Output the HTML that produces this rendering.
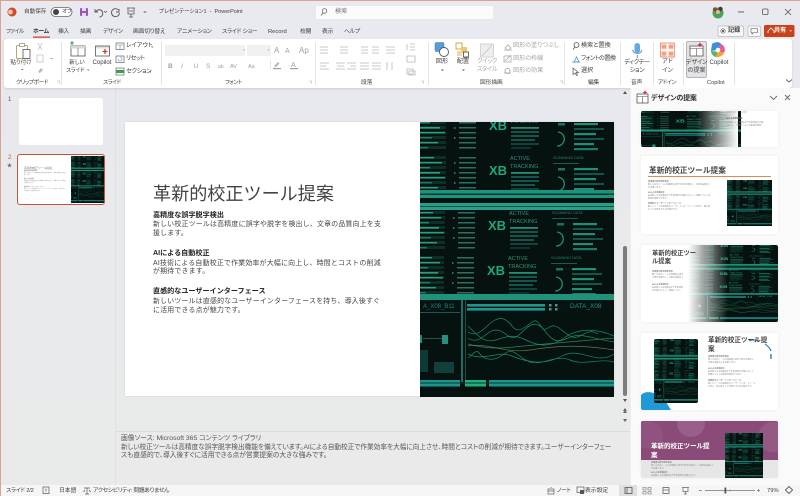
<!DOCTYPE html>
<html lang="ja"><head><meta charset="utf-8"><title>プレゼンテーション1 - PowerPoint</title>
<style>
html,body{margin:0;padding:0}
body{width:800px;height:496px;overflow:hidden;position:relative;background:#e9eaef;font-family:"Liberation Sans","Noto Sans CJK JP",sans-serif;color:#444}
#w{position:absolute;left:0;top:0;width:800px;height:496px;overflow:hidden;background:#e9eaef;filter:blur(.35px)}
.a{position:absolute}
.t{position:absolute;white-space:nowrap;line-height:8px;font-size:6.1px;font-feature-settings:"palt";color:#3f3f3f}
.tab{font-size:5.8px;letter-spacing:-.2px;top:28px}
.gl{font-size:5.7px;letter-spacing:-.45px;top:79px}
.st{font-size:5.8px;top:487px}
.c{text-align:center}
.g{color:#a6a6a6}
.b{font-weight:700}
.s{position:absolute;white-space:nowrap;color:#444;font-size:6.9px;line-height:9px;letter-spacing:.24px}
.h{position:absolute;white-space:nowrap;color:#222;font-size:7.1px;line-height:9px;font-weight:700}
.m{position:absolute;white-space:nowrap;font-size:2.1px;line-height:3px;color:#888}
.card{position:absolute;left:641px;width:137px;background:#fff;border-radius:2px;overflow:hidden;box-shadow:0 0 3px rgba(0,0,0,.07)}
.sep{position:absolute;top:42px;height:43px;width:1px;background:#e4e4e4}
svg{display:block}
</style></head><body><div id="w">
<svg width="0" height="0" style="position:absolute"><defs>
<g id="blk">
<g fill="#0e2e28"><rect x="0" y="1" width="26" height="3"/><rect x="0" y="6" width="26" height="3"/><rect x="0" y="11" width="26" height="3"/><rect x="0" y="16" width="26" height="3"/><rect x="0" y="21" width="26" height="3"/><rect x="0" y="26" width="26" height="3"/><rect x="0" y="31" width="26" height="3"/><rect x="0" y="36" width="26" height="3"/></g>
<rect x="0" y="2" width="14" height="1.400" fill="#25a080"/><rect x="0" y="7" width="22" height="1.400" fill="#25a080"/><rect x="0" y="12" width="10" height="1.400" fill="#1f8a6e"/><rect x="0" y="17" width="20" height="1.600" fill="#25a080"/><rect x="0" y="22" width="25" height="1.400" fill="#25a080"/><rect x="0" y="27" width="12" height="1.400" fill="#1a7a62"/><rect x="0" y="32" width="18" height="1.400" fill="#25a080"/><rect x="0" y="37" width="8" height="1.400" fill="#1a7a62"/>
<g fill="#2f6f63"><rect x="39" y="2" width="17" height="1.500"/><rect x="39" y="7" width="17" height="1.500"/><rect x="39" y="12" width="17" height="1.500"/><rect x="39" y="17" width="17" height="1.500"/><rect x="39" y="22" width="17" height="1.500"/><rect x="39" y="27" width="17" height="1.500"/><rect x="39" y="32" width="17" height="1.500"/><rect x="39" y="37" width="17" height="1.500"/><rect x="34" y="7" width="1.500" height="2"/><rect x="34" y="17" width="1.500" height="2"/><rect x="34" y="27" width="1.500" height="2"/></g>
<text x="69" y="20" font-family="Liberation Sans" font-size="13" font-weight="700" fill="#1ea782" textLength="18" lengthAdjust="spacingAndGlyphs">XB</text>
<text x="90" y="5" font-family="Liberation Sans" font-size="5.500" fill="#33907f">ACTIVE</text><text x="90" y="13" font-family="Liberation Sans" font-size="5.500" fill="#33907f">TRACKING</text>
<rect x="91" y="17" width="28" height="1.800" fill="#1f9077"/><rect x="91" y="21" width="28" height="2" fill="#14544a"/><rect x="91" y="25" width="28" height="2" fill="#14544a"/><rect x="91" y="29" width="24" height="2" fill="#14544a"/><rect x="91" y="33" width="28" height="2" fill="#10433c"/><rect x="91" y="37" width="20" height="2" fill="#0d342f"/>
<text x="133" y="4" font-family="Liberation Sans" font-size="3.800" fill="#2c8070">SCANNING DATA</text><rect x="133" y="8" width="26" height="1" fill="#1b5b50"/><rect x="138" y="13" width="7" height="2.500" fill="#1f7060"/>
<path d="M138 22a7 7 0 0 1 5 11a7 7 0 0 1-6 3" fill="none" stroke="#1f9077" stroke-width="1.300"/>
<rect x="154" y="13" width="24" height="2.200" fill="#1f9077"/><rect x="154" y="18" width="30" height="2" fill="#14544a"/><rect x="154" y="23" width="22" height="2.200" fill="#1f9077"/><rect x="154" y="28" width="30" height="2" fill="#14544a"/><rect x="154" y="33" width="20" height="2.200" fill="#1f9077"/><rect x="154" y="38" width="24" height="2.200" fill="#1a7a64"/>
</g>
<symbol id="art" viewBox="0 0 194 275" preserveAspectRatio="none">
<rect width="194" height="275" fill="#05120f"/>
<use href="#blk" y="-12"/><use href="#blk" y="33"/><use href="#blk" x="-1" y="88"/><use href="#blk" x="-2" y="133"/>
<rect y="68" width="194" height="8" fill="#1f9379"/><rect y="71.500" width="194" height="1.500" fill="#0a3a32"/>
<rect y="81" width="194" height="7" fill="#26a086"/><rect y="84" width="194" height="1" fill="#105045"/>
<rect y="172" width="194" height="6" fill="#1f9379"/>
<rect y="178" width="194" height="12" fill="#051412"/>
<text x="3" y="186" font-family="Liberation Sans" font-size="6" fill="#2a7f75">A_X08_B11</text>
<rect x="47" y="182" width="78" height="2.600" fill="#1f958c"/><rect x="47" y="186" width="78" height="2.600" fill="#1f958c"/>
<rect x="129" y="182" width="2.500" height="2.500" fill="#5a8f85"/><rect x="135" y="182" width="2.500" height="2.500" fill="#5a8f85"/><rect x="129" y="186" width="2.500" height="2.500" fill="#5a8f85"/><rect x="135" y="186" width="2.500" height="2.500" fill="#5a8f85"/>
<text x="150" y="186" font-family="Liberation Sans" font-size="6.500" fill="#2a8f83">DATA_X08</text>
<rect x="41" y="178" width="2" height="82" fill="#246b63"/><rect x="45" y="178" width="1" height="82" fill="#18504a"/>
<rect y="190" width="40" height="1" fill="#1d5a53"/>
<rect x="0" y="213" width="2" height="8" fill="#1f8a7c"/><rect x="22" y="213" width="6" height="9" fill="#2a8f7f"/><rect x="3" y="216" width="19" height="1" fill="#1d5a53"/>
<rect x="0" y="228" width="8" height="22" fill="#0e3a36"/><rect x="14" y="240" width="20" height="11" fill="#123f3b"/>
<g fill="none" stroke="#1c8a65" stroke-width=".7">
<path d="M48 210C58 216 64 206 72 200S86 196 92 204 104 206 112 200 120 212 128 206 140 208 150 214 166 204 178 212 194 210"/>
<path d="M48 216C60 224 66 208 76 208S90 222 100 212 116 198 124 208 136 222 148 216 170 216 194 220"/>
<path d="M48 204C56 212 64 222 76 218S94 212 106 218 130 226 144 216 176 206 194 214"/>
<path d="M48 222C70 228 86 226 104 224S150 220 194 216"/>
<path d="M48 236C54 232 56 226 60 232S74 240 84 232 98 236 110 240 136 232 150 238 178 236 194 240"/>
<path d="M48 232C64 240 78 228 92 234S124 244 142 234 176 244 194 232"/>
<path d="M48 224C66 220 86 232 110 228S160 222 194 228" stroke="#8f9f70" stroke-opacity=".7"/>
</g>
<rect y="258" width="40" height="6.500" fill="#1d958b"/><rect x="45" y="258" width="21" height="6.500" fill="#20b07c"/><rect x="69" y="258" width="125" height="6.500" fill="#1d958b"/><rect y="260.500" width="194" height="1" fill="#073a35"/>
</symbol>
</defs></svg>

<!-- window border -->
<div class="a" style="left:0;top:0;width:800px;height:1px;background:#d9a394"></div>
<div class="a" style="left:0;top:0;width:1px;height:496px;background:#d9a394"></div>

<!-- workspace -->
<div class="a" style="left:1px;top:88px;width:114px;height:397px;background:linear-gradient(#e8e9ed,#e9ebea)"></div>
<div class="a" style="left:115px;top:88px;width:515px;height:344px;background:linear-gradient(#e8e9ee,#e9eaea)"></div>
<div class="a" style="left:115px;top:88px;width:1px;height:397px;background:#e0e1e2"></div>
<div class="a" style="left:116px;top:431px;width:514px;height:54px;background:#e9eae9;border-top:1px solid #dcdcdc;box-sizing:border-box"></div>

<!-- title bar -->
<svg class="a" style="left:0;top:0" width="800" height="40">
<circle cx="12" cy="12" r="4.500" fill="#d24726"/><circle cx="10.500" cy="12" r="2.400" fill="#f6c9b5"/>
<rect x="51" y="7.500" width="21" height="9" rx="4.500" fill="#fff" stroke="#666" stroke-width=".8"/><circle cx="56" cy="12" r="3" fill="#444"/>
<rect x="80" y="8" width="8" height="8" rx="1" fill="#9a55bd"/><rect x="82" y="8" width="4" height="3" fill="#e8d8f0"/><rect x="82" y="13" width="4" height="3" fill="#e8d8f0"/>
<path d="M95 9v3h3M95.500 12c2-3 6-3 7 0s-1 5-3 5" fill="none" stroke="#555" stroke-width=".9"/><path d="M104 11l1.500 1.500 1.500-1.500" fill="none" stroke="#555" stroke-width=".7"/>
<path d="M119 9v3h-3M118.500 10a4 4 0 1 0 1 3" fill="none" stroke="#555" stroke-width=".9"/>
<path d="M127 8h8M128 8v6h6V8M131 14v3M129 17h4M129 11h4" fill="none" stroke="#555" stroke-width=".8"/>
<path d="M143 11.500l2 1.500 2-1.500z" fill="#666"/>
<rect x="315.500" y="5.500" width="178" height="14" rx="1.500" fill="#fbfbfc" stroke="#e6e6ea" stroke-width=".8"/>
<circle cx="324.500" cy="11" r="2.300" fill="none" stroke="#666" stroke-width=".8"/><path d="M323 13l-2 2.500" stroke="#666" stroke-width=".8"/>
<circle cx="718" cy="13" r="5.500" fill="#46a35a"/><circle cx="715" cy="9.500" r="2.200" fill="#8a4a32"/><circle cx="720.500" cy="9" r="2.200" fill="#3d3a3a"/><circle cx="718" cy="12" r="2" fill="#e8b89a"/>
<rect x="738" y="11.500" width="6" height=".9" fill="#555"/><rect x="762.500" y="9" width="5.500" height="5.500" rx="1" fill="none" stroke="#555" stroke-width=".8"/>
<path d="M785 9l6 6M791 9l-6 6" stroke="#555" stroke-width=".8"/>
<rect x="718" y="26" width="25.500" height="10.500" rx="1.500" fill="#f8f8f9" stroke="#b8b8bc" stroke-width=".7"/><circle cx="723" cy="31" r="2.200" fill="none" stroke="#555" stroke-width=".6"/><circle cx="723" cy="31" r="1" fill="#333"/>
<rect x="748" y="26" width="12.500" height="10.500" rx="1.500" fill="#f8f8f9" stroke="#b8b8bc" stroke-width=".7"/><path d="M751 28.500h6.500v4h-4l-1.500 1.500v-1.500h-1z" fill="none" stroke="#555" stroke-width=".6"/>
<rect x="764" y="25" width="30.500" height="12" rx="1.500" fill="#c8421c"/><path d="M768 33v-2l3-3 3 3v2" fill="none" stroke="#fff" stroke-width=".8"/><path d="M789.500 30.500l1.200 1.200 1.200-1.200z" fill="#fff"/>
<rect x="33" y="36.500" width="17" height="1.200" fill="#c8391c"/>
</svg>
<span class="t" style="left:24px;top:8px;font-size:5.600px">自動保存</span>
<span class="t" style="left:62px;top:8px;font-size:5.500px">オフ</span>
<span class="t" style="left:159px;top:8px;font-size:5.500px">プレゼンテーション1&nbsp; -&nbsp; PowerPoint</span>
<span class="t" style="left:335px;top:8px;color:#777">検索</span>
<span class="t b" style="left:728px;top:27px">記録</span>
<span class="t b" style="left:774px;top:27px;color:#fff">共有</span>

<!-- tabs -->
<span class="t tab" style="left:6px;letter-spacing:-.6px">ファイル</span>
<span class="t tab b" style="left:33px;color:#333">ホーム</span>
<span class="t tab" style="left:58px">挿入</span>
<span class="t tab" style="left:80px">描画</span>
<span class="t tab" style="left:103px;letter-spacing:-.4px">デザイン</span>
<span class="t tab" style="left:133px">画面切り替え</span>
<span class="t tab" style="left:177px">アニメーション</span>
<span class="t tab" style="left:222px">スライド ショー</span>
<span class="t tab" style="left:268px;letter-spacing:0">Record</span>
<span class="t tab" style="left:300px">校閲</span>
<span class="t tab" style="left:322px">表示</span>
<span class="t tab" style="left:344px">ヘルプ</span>

<!-- ribbon -->
<div class="a" style="left:4px;top:39px;width:788px;height:49px;background:#fff;border-radius:3px;box-shadow:0 1px 2px rgba(0,0,0,.12)"></div>
<i class="sep" style="left:61px"></i><i class="sep" style="left:161px"></i><i class="sep" style="left:315px"></i><i class="sep" style="left:428px"></i><i class="sep" style="left:564px"></i><i class="sep" style="left:620px"></i><i class="sep" style="left:653px"></i><i class="sep" style="left:683px"></i><i class="sep" style="left:734px"></i>
<div class="a" style="left:686px;top:41px;width:21px;height:37px;background:#e4e4e6;border:1px solid #b4b4b8;border-radius:2px;box-sizing:border-box"></div>
<div class="a" style="left:165px;top:45px;width:80px;height:11px;background:#f1f1f1"></div>
<div class="a" style="left:247px;top:45px;width:24px;height:11px;background:#f1f1f1"></div>

<svg class="a" style="left:0;top:0" width="800" height="90">
<!-- clipboard -->
<rect x="16.500" y="45.500" width="11" height="13" rx="1" fill="#fff" stroke="#c9a060" stroke-width="1"/><rect x="19.500" y="43.500" width="5" height="3" fill="#fff" stroke="#888" stroke-width=".7"/><rect x="23" y="49.500" width="7" height="9" fill="#fff" stroke="#555" stroke-width=".8"/>
<path d="M38 43l4 7M42 43l-4 7" stroke="#bbb" stroke-width=".7"/><rect x="37" y="55" width="6" height="7" fill="none" stroke="#bbb" stroke-width=".7"/><path d="M50 58.500h3" stroke="#999" stroke-width=".7"/><path d="M38 72l3-4 2 2-3 3z" fill="#bbb"/><path d="M21 69l1.200 1.200 1.200-1.200z" fill="#555"/>
<!-- new slide -->
<rect x="71" y="46" width="14" height="10" fill="#fff" stroke="#555" stroke-width=".8"/><rect x="71" y="46" width="14" height="2.500" fill="#d8d8d8"/><path d="M78 48v8" stroke="#555" stroke-width=".6"/><path d="M74 43h-4M72 41v4" stroke="#3f9a50" stroke-width="1"/>
<rect x="95.500" y="46" width="14" height="10" fill="#fff" stroke="#555" stroke-width=".8"/><rect x="96" y="46.500" width="13" height="2" fill="#ddd"/><path d="M105 49v5M102.500 51.500h5" stroke="#c8421c" stroke-width="1.300"/>
<!-- slide small -->
<rect x="116" y="43" width="8" height="6.500" fill="#fff" stroke="#666" stroke-width=".7"/><path d="M117 45h6M120 45v4" stroke="#4a8fc0" stroke-width=".6"/>
<rect x="116" y="56" width="8" height="6.500" fill="#fff" stroke="#666" stroke-width=".7"/><path d="M118 59a2 2 0 1 0 2-2" fill="none" stroke="#4a8fc0" stroke-width=".6"/>
<rect x="116" y="68" width="8" height="7" fill="#fff" stroke="#666" stroke-width=".7"/><rect x="116" y="70" width="8" height="3" fill="#3f9a50"/>
<path d="M151 46.500l1.200 1.200 1.200-1.200zM149 71.500l1.200 1.200 1.200-1.200zM87 69.500l1.200 1.200 1.200-1.200z" fill="#555"/>
<!-- font gray -->
<g font-family="Liberation Sans" fill="#a0a0a0" font-size="8">
<text x="274" y="53">A</text><text x="285" y="53" font-size="7">A</text><text x="299" y="53">Ap</text>
<text x="168" y="68" font-size="6.500" font-weight="700">B</text><text x="181" y="68" font-size="6.500" font-style="italic">I</text><text x="193.500" y="68" font-size="6.500">U</text><text x="206" y="68" font-size="6.500">S</text><text x="218" y="68" font-size="5">ab</text><text x="230" y="68" font-size="5.500">AV</text><text x="248" y="68" font-size="5.500">Aa</text><text x="291" y="67" font-size="7">A</text>
</g>
<rect x="290" y="68" width="8" height="1.200" fill="#a0a0a0"/><rect x="273" y="68" width="8" height="1.200" fill="#a0a0a0"/><path d="M274 66l4-4 1.500 1.500-4 4z" fill="#b8b8b8"/><rect x="270" y="60" width=".8" height="10" fill="#ddd"/>
<path d="M242.500 49.500l1.500 1.500 1.500-1.500zM267 49.500l1.500 1.500 1.500-1.500z" fill="#b8b8b8"/>
<!-- paragraph gray -->
<g stroke="#b8b8b8" stroke-width=".8" fill="none">
<path d="M320 47h8M320 50h8M320 53h8M340 47h8M340 50h8M340 53h8M361 47h7M361 50h7M361 53h7M372 47h7M372 50h7M372 53h7M386 47h9M386 50h9M386 53h9M407 44v6M410 44h5M410 47h5M410 50h5"/>
<path d="M320 63h9M320 66h6M320 69h9M336 63h9M337 66h7M336 69h9M347 63h9M350 66h6M347 69h9M360 63h9M360 66h9M360 69h9M372 63h9M372 66h9M372 69h9M387 62v8M392 62v8M407 56h8v6h-8zM407 69h6v5h-6zM409 71h6v4h-6z"/>
</g>
<!-- shapes -->
<rect x="435" y="42.500" width="9" height="9" rx="1" fill="#5b9bd5" stroke="#3f7fb8" stroke-width=".5"/><circle cx="444" cy="52" r="4.500" fill="#fff" stroke="#555" stroke-width=".9"/>
<rect x="456" y="43" width="6" height="6" fill="#fff" stroke="#c9a030" stroke-width=".9"/><rect x="461" y="47" width="6" height="6" fill="#f3c770"/><rect x="463.500" y="52" width="5" height="5" fill="#fff" stroke="#444" stroke-width=".8"/><rect x="457" y="51" width="5" height="5" fill="#f3d9a0"/>
<rect x="480.500" y="44" width="13" height="13" fill="#eee" stroke="#d5d5d5"/><path d="M482 56l10-11" stroke="#ccc" stroke-width="1"/>
<path d="M441 69.500l1.500 1.500 1.500-1.500zM462 69.500l1.500 1.500 1.500-1.500z" fill="#555"/>
<path d="M505 48l3-3 3 3-3 2.500zM504 50h8" fill="none" stroke="#aaa" stroke-width=".8"/><rect x="504" y="56" width="7" height="6" fill="none" stroke="#aaa" stroke-width=".8"/><path d="M505 61l6-6" stroke="#aaa" stroke-width=".8"/><circle cx="507.500" cy="71" r="2.500" fill="none" stroke="#aaa" stroke-width=".9"/><path d="M504 73h7" stroke="#aaa" stroke-width=".8"/>
<!-- edit -->
<circle cx="576.500" cy="45" r="2.500" fill="none" stroke="#555" stroke-width=".8"/><path d="M575 47l-2 2.500" stroke="#555" stroke-width=".8"/>
<path d="M574 62l2.500-5 2.500 5z" fill="none" stroke="#4a8fc0" stroke-width=".8"/><path d="M572 62h8" stroke="#4a8fc0" stroke-width=".7"/>
<path d="M573 68v6.500l2-1.500 1.500 2.500 1-.6-1.300-2.400h2.300z" fill="#fff" stroke="#555" stroke-width=".7"/>
<!-- mic -->
<rect x="634.500" y="43" width="5.500" height="10" rx="2.750" fill="#68a8e0"/><path d="M632.500 50a5 5 0 0 0 9.500 0M637.250 55v3" fill="none" stroke="#4a8fc0" stroke-width=".9"/>
<!-- addin -->
<rect x="660.500" y="43" width="14" height="14" fill="#f8d9cc" stroke="#e08a66" stroke-width=".8"/><path d="M667.500 43v14M660.500 50h14" stroke="#fff" stroke-width="1.200"/><rect x="662" y="45" width="4" height="3.500" fill="#f0a080"/><rect x="669" y="45" width="4" height="3.500" fill="#f0a080"/><rect x="662" y="52" width="4" height="3.500" fill="#f0a080"/><rect x="669" y="52" width="4" height="3.500" fill="#f0a080"/>
<!-- designer -->
<rect x="690" y="46" width="13" height="10" fill="#fff" stroke="#555" stroke-width=".8"/><path d="M690 48.500h13M696.500 48.500v7.500" stroke="#555" stroke-width=".6"/><path d="M700 42l.8 2 2 .8-2 .8-.8 2-.8-2-2-.8 2-.8z" fill="#d0304c"/>
<!-- copilot -->
<path d="M712 44c3-2.500 8-2.500 9 0l-3 6-7 1z" fill="#3f8ed8"/><path d="M721 44c3 1 4.500 5 3.500 8l-5 .5-2-3z" fill="#e85a9a"/><path d="M724.500 52c-1 3.500-5 5.500-9 5l1-5z" fill="#f2a33a"/><path d="M716 57c-3-.500-5-3.500-5-6l6 .5z" fill="#50b86a"/><circle cx="718" cy="50" r="2.300" fill="#fff"/>
<path d="M786 79.500l3 2.500 3-2.500" fill="none" stroke="#666" stroke-width=".9"/>
<path d="M57 81h2.500v2.500M309 81h2.500v2.500M421 81h2.500v2.500M560 81h2.500v2.500" fill="none" stroke="#aaa" stroke-width=".6"/>
</svg>

<span class="t c" style="left:8px;top:59px;width:26px;font-size:5.600px">貼り付け</span>
<span class="t c" style="left:62px;top:59px;width:30px;font-size:5.600px">新しい</span>
<span class="t c" style="left:60px;top:67px;width:30px;font-size:5.600px;letter-spacing:-.3px">スライド</span>
<span class="t c" style="left:88px;top:59px;width:28px">Copilot</span>
<span class="t" style="left:126px;top:42px">レイアウト</span>
<span class="t" style="left:126px;top:55px;letter-spacing:-.4px">リセット</span>
<span class="t" style="left:126px;top:68px;letter-spacing:-.3px">セクション</span>
<span class="t gl" style="left:16px">クリップボード</span>
<span class="t gl" style="left:103px">スライド</span>
<span class="t gl" style="left:225px">フォント</span>
<span class="t gl" style="left:361px;letter-spacing:0">段落</span>
<span class="t gl" style="left:480px;letter-spacing:0">図形描画</span>
<span class="t gl" style="left:588px;letter-spacing:0">編集</span>
<span class="t gl" style="left:631px;letter-spacing:0">音声</span>
<span class="t gl" style="left:658px">アドイン</span>
<span class="t gl" style="left:707px;letter-spacing:0">Copilot</span>
<span class="t c" style="left:430px;top:58px;width:24px">図形</span>
<span class="t c" style="left:451px;top:58px;width:24px">配置</span>
<span class="t c g" style="left:475px;top:58px;width:24px;letter-spacing:-.3px">クイック</span>
<span class="t c g" style="left:473px;top:66px;width:28px;letter-spacing:-.3px">スタイル</span>
<span class="t g" style="left:513px;top:42px">図形の塗りつぶし</span>
<span class="t g" style="left:513px;top:55px">図形の枠線</span>
<span class="t g" style="left:513px;top:67px">図形の効果</span>
<span class="t" style="left:581px;top:42px">検索と置換</span>
<span class="t" style="left:581px;top:55px;letter-spacing:-.5px">フォントの置換</span>
<span class="t" style="left:581px;top:67px">選択</span>
<span class="t c" style="left:622px;top:59px;width:30px;letter-spacing:-.3px">ディクテー</span>
<span class="t c" style="left:622px;top:67px;width:30px;letter-spacing:-.3px">ション</span>
<span class="t c" style="left:656px;top:58px;width:23px">アド</span>
<span class="t c" style="left:656px;top:67px;width:23px">イン</span>
<span class="t c" style="left:686px;top:59px;width:21px;letter-spacing:-.3px">デザイン</span>
<span class="t c" style="left:686px;top:67px;width:21px">の提案</span>
<span class="t c" style="left:706px;top:59px;width:26px">Copilot</span>

<!-- thumbnails -->
<span class="t" style="left:8px;top:96px;color:#555">1</span>
<div class="a" style="left:19px;top:98px;width:84px;height:47px;background:#fff;border-radius:2px"></div>
<span class="t" style="left:8px;top:154px;color:#c8533a">2</span>
<span class="t" style="left:7px;top:162px;font-size:5px;color:#666">★</span>
<div class="a" style="left:17px;top:154px;width:88px;height:51px;border:1.500px solid #c4533a;border-radius:3px;box-sizing:border-box;background:#fff;overflow:hidden">
<svg class="a" style="left:53px;top:1px" width="33" height="47"><use href="#art" width="33" height="47"/></svg>
<span class="m" style="left:6px;top:11px;font-size:2.800px;line-height:4px;color:#777">革新的校正ツール提案</span>
<span class="m" style="left:6px;top:16px;font-size:1.300px;line-height:2px;color:#888"><b>高精度な誤字脱字検出</b><br>新しい校正ツールは高精度に誤字や脱字を検出し、文章の品質向上を支<br>援します。</span>
<span class="m" style="left:6px;top:24px;font-size:1.300px;line-height:2px;color:#888"><b>AIによる自動校正</b><br>AI技術による自動校正で作業効率が大幅に向上し、時間とコストの削減<br>が期待できます。</span>
<span class="m" style="left:6px;top:32px;font-size:1.300px;line-height:2px;color:#888"><b>直感的なユーザーインターフェース</b><br>新しいツールは直感的なユーザーインターフェースを持ち、導入後すぐ<br>に活用できる点が魅力です。</span>
</div>

<!-- slide -->
<div class="a" style="left:125px;top:122px;width:489px;height:274px;background:#fff;box-shadow:0 0 2px rgba(0,0,0,.1)"></div>
<svg class="a" style="left:419.500px;top:121.500px" width="194" height="275"><use href="#art" width="194" height="275"/></svg>
<div class="s" style="left:153px;top:182px;font-size:18.100px;line-height:24px;color:#444;letter-spacing:0">革新的校正ツール提案</div>
<div class="h" style="left:153px;top:211px">高精度な誤字脱字検出</div>
<div class="s" style="left:153px;top:220px">新しい校正ツールは高精度に誤字や脱字を検出し、文章の品質向上を支</div>
<div class="s" style="left:153px;top:229px">援します。</div>
<div class="h" style="left:153px;top:249px">AIによる自動校正</div>
<div class="s" style="left:153px;top:258.500px">AI技術による自動校正で作業効率が大幅に向上し、時間とコストの削減</div>
<div class="s" style="left:153px;top:267px">が期待できます。</div>
<div class="h" style="left:153px;top:287px">直感的なユーザーインターフェース</div>
<div class="s" style="left:153px;top:297px">新しいツールは直感的なユーザーインターフェースを持ち、導入後すぐ</div>
<div class="s" style="left:153px;top:305.500px">に活用できる点が魅力です。</div>

<!-- scrollbar -->
<div class="a" style="left:623px;top:246px;width:4px;height:150px;background:#7d7d7f;border-radius:2px"></div>
<svg class="a" style="left:620px;top:88px" width="10" height="335">
<path d="M3 6l2-3 2 3z" fill="#555"/><path d="M3 311l2 3 2-3z" fill="#555"/><path d="M3 323l2-3 2 3zM3 325l2-3 2 3z" fill="#666"/><path d="M3 331l2 3 2-3z" fill="#666"/>
</svg>

<!-- notes -->
<div class="t" style="left:121px;top:435px;font-size:6.800px;color:#555">画像ソース: Microsoft 365 コンテンツ ライブラリ</div>
<div class="t" style="left:121px;top:444px;font-size:6.650px;color:#555">新しい校正ツールは高精度な誤字脱字検出機能を備えています。AIによる自動校正で作業効率を大幅に向上させ、時間とコストの削減が期待できます。ユーザーインターフェー</div>
<div class="t" style="left:121px;top:452px;font-size:6.750px;color:#555">スも直感的で、導入後すぐに活用できる点が営業提案の大きな強みです。</div>

<!-- design pane -->
<div class="a" style="left:630px;top:88px;width:170px;height:397px;background:#fafafa;border-left:1px solid #eee;box-sizing:border-box"></div>
<svg class="a" style="left:630px;top:88px" width="170" height="24">
<rect x="7" y="6" width="11" height="9" fill="#fff" stroke="#555" stroke-width=".8"/><path d="M7 8.500h11M12.500 8.500v6.500" stroke="#555" stroke-width=".6"/><path d="M15 2l.7 1.800 1.800.7-1.800.7-.7 1.800-.7-1.800-1.800-.7 1.800-.7z" fill="#d0304c"/>
<path d="M140 8l3.500 3.500L147 8M155 7l5 5M160 7l-5 5" fill="none" stroke="#666" stroke-width=".9"/>
</svg>
<span class="t b" style="left:651px;top:95px;font-size:7px;color:#333;letter-spacing:-.2px">デザインの提案</span>

<div class="card" style="top:111px;height:36px">
<svg class="a" style="left:0;top:0" width="100" height="36"><use href="#art" y="-44" width="100" height="100"/></svg>
<div class="a" style="left:55px;top:0;width:42px;height:36px;background:linear-gradient(90deg,rgba(255,255,255,0),#fff)"></div>
<span class="m" style="left:85px;top:1px;color:#aaa">革新的校正ツール提案</span>
<span class="m" style="left:85px;top:7px;color:#666"><b>AIによる自動校正</b></span>
<span class="m" style="left:85px;top:11px">AI技術による自動校正で作業効率が大幅<br>に向上し、時間とコストの削減が期待</span>
</div>

<div class="card" style="top:156px;height:78px">
<span class="t b" style="left:8px;top:10px;font-size:7.700px;line-height:9px;color:#444;font-feature-settings:normal">革新的校正ツール提案</span>
<div class="a" style="left:7px;top:19.500px;width:123px;height:1px;background:#dc8a5c"></div>
<svg class="a" style="left:86px;top:24px" width="45" height="46"><use href="#art" width="45" height="46"/></svg>
<span class="m" style="left:7px;top:25px"><b>高精度な誤字脱字検出</b><br>新しい校正ツールは高精度に誤字や脱字を検出し、文章の品質向上<br>を支援します。</span>
<span class="m" style="left:7px;top:36px"><b>AIによる自動校正</b><br>AI技術による自動校正で作業効率が大幅に向上し、時間とコストの<br>削減が期待できます。</span>
<span class="m" style="left:7px;top:47px"><b>直感的なユーザーインターフェース</b><br>新しいツールは直感的なユーザーインターフェースを持ち、導入後<br>すぐに活用できる点が魅力です。</span>
</div>

<div class="card" style="top:245px;height:77px">
<svg class="a" style="left:47px;top:0" width="90" height="77"><use href="#art" width="90" height="77"/></svg>
<div class="a" style="left:47px;top:0;width:40px;height:77px;background:linear-gradient(90deg,#fff,rgba(255,255,255,0))"></div>
<span class="t b" style="left:11px;top:5px;font-size:6.300px;line-height:8px;color:#444;font-feature-settings:normal">革新的校正ツー<br>ル提案</span>
<span class="m" style="left:11px;top:26px"><b>高精度な誤字脱字検出</b><br>新しい校正ツールは高精度に誤字<br>や脱字を検出し、文章の品質向上</span>
<span class="m" style="left:11px;top:39px"><b>AIによる自動校正</b><br>AI技術による自動校正で作業効率<br>が大幅に向上し、時間とコスト</span>
</div>

<div class="card" style="top:333px;height:77px">
<svg class="a" style="left:0;top:0" width="137" height="77">
<path d="M0 62C6 56 16 61 22 64L30 77H0z" fill="#1f9ad6"/>
<path d="M108 8c4-2 6-1 9 0M124 11c3 2 5 4 6 7" fill="none" stroke="#2a8fb8" stroke-width="1.200"/><path d="M130 21v5" stroke="#2a8fb8" stroke-width="1.500"/>
</svg>
<svg class="a" style="left:13px;top:6px;border-radius:2px" width="44" height="64"><use href="#art" width="44" height="64"/></svg>
<span class="t b" style="left:67px;top:4px;font-size:6.600px;line-height:8.500px;color:#444;font-feature-settings:normal">革新的校正ツール提<br>案</span>
<span class="m" style="left:67px;top:23px"><b>高精度な誤字脱字検出</b><br>新しい校正ツールは高精度に誤字や脱字を検出し<br>文章の品質向上を支援します。</span>
<span class="m" style="left:67px;top:35px"><b>AIによる自動校正</b><br>AI技術による自動校正で作業効率が大幅に向上し<br>時間とコストの削減が期待できます。</span>
<span class="m" style="left:67px;top:47px"><b>直感的なユーザーインターフェース</b><br>新しいツールは直感的なユーザーインターフェース<br>を持ち、導入後すぐに活用できる点が魅力です。</span>
</div>

<div class="card" style="top:421px;height:57px;background:#e6e6e6">
<div class="a" style="left:0;top:0;width:137px;height:39px;background:#8b4b79"></div>
<svg class="a" style="left:0;top:0" width="137" height="39"><circle cx="50" cy="2" r="14" fill="#9a5f88"/><circle cx="8" cy="14" r="14" fill="#905380"/><circle cx="132" cy="16" r="15" fill="#955a83"/></svg>
<svg class="a" style="left:84px;top:12px" width="38" height="45"><use href="#art" width="38" height="45"/></svg>
<span class="t b" style="left:10px;top:22px;font-size:6.500px;line-height:8.500px;color:#fff;font-feature-settings:normal">革新的校正ツール提<br>案</span>
<span class="m" style="left:10px;top:41px"><b>高精度な誤字脱字検出</b><br>新しい校正ツールは高精度に誤字や脱字を検出し、文章の品質向上<br>を支援します。</span>
<span class="m" style="left:10px;top:51px"><b>AIによる自動校正</b><br>AI技術による自動校正で作業効率が大幅に向上し</span>
</div>

<!-- status bar -->
<div class="a" style="left:1px;top:485px;width:799px;height:11px;background:#f6f6f7"></div>
<div class="a" style="left:619px;top:485px;width:18px;height:11px;background:#dfdfe1"></div>
<svg class="a" style="left:0;top:485px" width="800" height="11">
<rect x="43" y="2" width="6" height="6.500" fill="none" stroke="#555" stroke-width=".7"/><path d="M46 3.500v3" stroke="#555" stroke-width=".7"/>
<path d="M84 3h6M87 3v6M85 9h4M85 5l-1.500 2M89 5l1.500 2" fill="none" stroke="#555" stroke-width=".7"/>
<path d="M551 2v1M548 4h6v5h-6zM548 6h6" fill="none" stroke="#666" stroke-width=".7"/>
<rect x="577" y="2" width="7" height="5.500" fill="none" stroke="#555" stroke-width=".7"/><rect x="580" y="5" width="4" height="4" fill="#555"/>
<rect x="625" y="2.500" width="7" height="6" fill="none" stroke="#555" stroke-width=".8"/><path d="M627 2.500v6" stroke="#555" stroke-width=".7"/>
<path d="M643 2.500h3v2.500h-3zM648 2.500h3v2.500h-3zM643 6.500h3v2.500h-3zM648 6.500h3v2.500h-3z" fill="none" stroke="#666" stroke-width=".6"/>
<rect x="663" y="2.500" width="6" height="6" fill="none" stroke="#666" stroke-width=".8"/><path d="M663 5h6" stroke="#666" stroke-width=".7"/>
<path d="M682 2.500h7M683 2.500v4h5v-4M685.500 6.500v2.500M684 9h3" fill="none" stroke="#666" stroke-width=".7"/>
<path d="M699 5.500h3M705 5.500h50M757 5.500h3M758.500 4v3" stroke="#777" stroke-width=".7"/>
<rect x="724.500" y="2.500" width="1.800" height="6" fill="#555"/><path d="M730 4.500v2" stroke="#777" stroke-width=".6"/>
<rect x="786.500" y="2.500" width="5" height="5" transform="rotate(45 789 5)" fill="none" stroke="#555" stroke-width=".9"/>
</svg>
<span class="t st" style="left:6px;letter-spacing:-.25px">スライド 2/2</span>
<span class="t st" style="left:59px">日本語</span>
<span class="t st" style="left:93px;letter-spacing:-.35px">アクセシビリティ: 問題ありません</span>
<span class="t st" style="left:557px;letter-spacing:-.3px">ノート</span>
<span class="t st" style="left:585px">表示設定</span>
<span class="t st" style="left:767px">79%</span>
</div></body></html>
